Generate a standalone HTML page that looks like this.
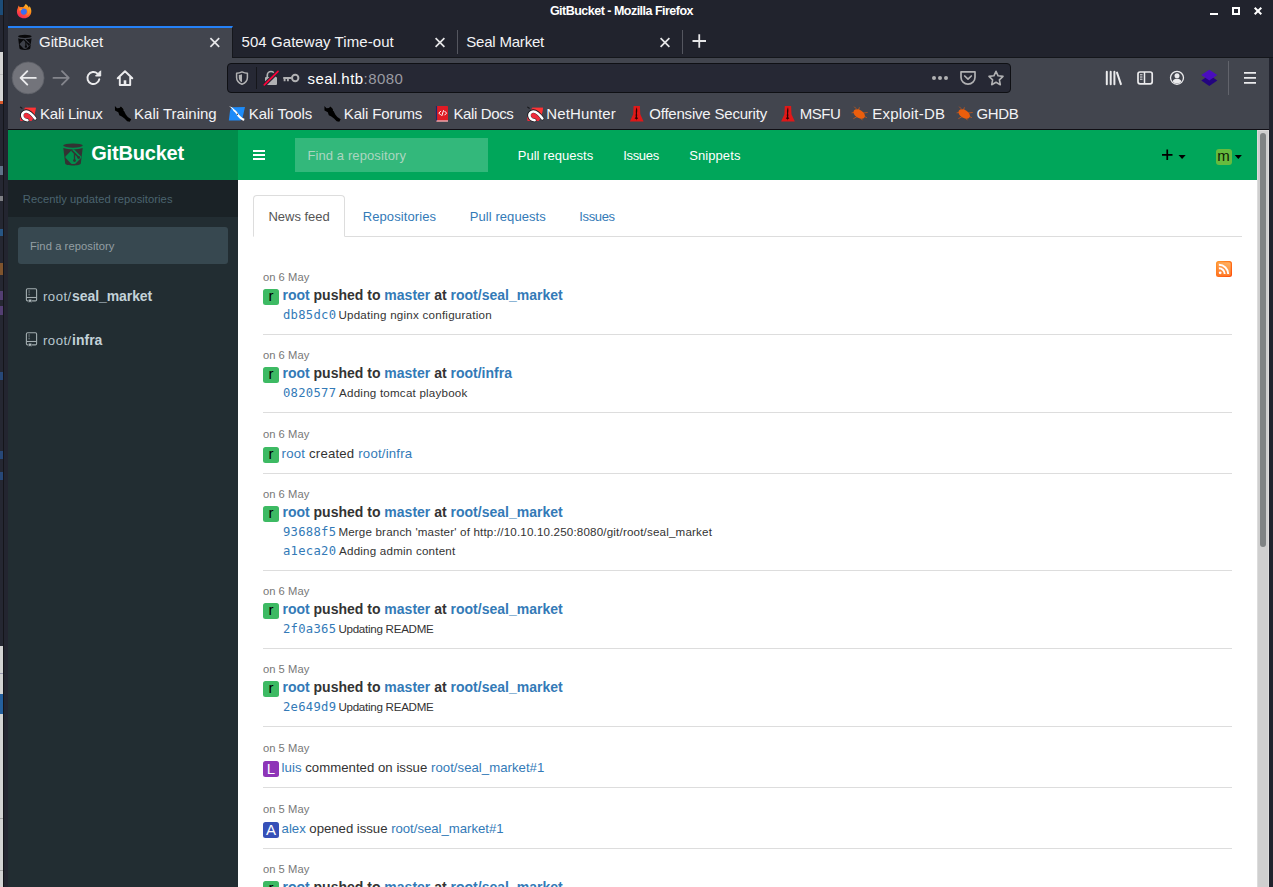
<!DOCTYPE html>
<html><head><meta charset="utf-8"><title>GitBucket</title>
<style>
*{box-sizing:border-box;margin:0;padding:0}
html,body{width:1273px;height:887px;overflow:hidden;background:#21232d;font-family:"Liberation Sans",sans-serif}
.abs{position:absolute}
#root{position:absolute;left:0;top:0;width:1273px;height:887px;overflow:hidden;background:#21232d}
svg{position:absolute;overflow:visible}
#ls div{position:absolute;left:0;width:3px}
#ls div.b{left:0;width:3px;opacity:.55}
#frame{left:3px;top:0;width:5px;height:887px;background:#232530;border-left:1px solid #14151a}
#title{left:8px;top:0;width:1265px;height:26px;background:#21232d}
#tabs{left:8px;top:26px;width:1265px;height:32px;background:#21232d;border-bottom:1px solid #14161b}
#tab1{left:0;top:0;width:225px;height:32px;background:#42454e;border-top:2px solid #2581f7;border-right:1px solid #15171c}
.tsep{top:4px;width:1px;height:24px;background:#54565f}
#nav{left:8px;top:58px;width:1261px;height:39px;background:#42454e}
#bm{left:8px;top:97px;width:1261px;height:32px;background:#42454e}
#sep{left:8px;top:129px;width:1261px;height:1px;background:#100e14}
#url{left:219px;top:5px;width:784px;height:30px;background:#262834;border:1px solid #0f1014;border-radius:4px}
#page{left:8px;top:130px;width:1249px;height:757px;background:#fff;overflow:hidden;font-size:13px;color:#333}
#logo{left:0;top:0;width:230px;height:50px;background:#008d4c}
#navbar{left:230px;top:0;width:1019px;height:50px;background:#00a65a}
#side{left:0;top:50px;width:230px;height:707px;background:#222d32}
#sidehead{left:0;top:0;width:230px;height:37px;background:#1a2226}
#scroll{left:1257px;top:130px;width:12px;height:757px;background:#cfcfcf;border:1px solid #dcdcdc;border-bottom:0}
#thumb{left:2px;top:2px;width:6px;height:414px;border-radius:3px;background:#7f8384}
a{color:#337ab7;text-decoration:none}
.s{font-family:"Liberation Sans",sans-serif;white-space:nowrap;position:absolute}
.av{width:16px;height:16px;border-radius:2.5px;font-size:15px;line-height:16px;text-align:center;font-family:"Liberation Sans",sans-serif}
.av i{font-style:normal;position:relative;top:0}
.av i.lo{top:-1px}
.hr{left:255px;width:969px;height:1px;background:#ddd}
</style></head><body>
<div id="root">
<div id="ls"><div style="top:0;height:887px;background:#252732"></div><div style="top:0;height:15px;background:#1c4c78"></div><div style="top:52px;height:49px;background:#d4d4d4"></div><div style="top:74px;height:1px;background:#bdbdbd"></div><div style="top:101px;height:3px;background:#d9582a"></div><div class="b" style="top:166px;height:9px;background:#8fb0d0"></div><div class="b" style="top:196px;height:5px;background:#c8c8c8"></div><div class="b" style="top:229px;height:7px;background:#2a7bc8"></div><div class="b" style="top:263px;height:12px;background:#c8782a"></div><div class="b" style="top:291px;height:9px;background:#7a52a8"></div><div class="b" style="top:306px;height:9px;background:#7a52a8"></div><div class="b" style="top:372px;height:8px;background:#2a62b0"></div><div class="b" style="top:451px;height:8px;background:#2a62b0"></div><div class="b" style="top:472px;height:8px;background:#2a62b0"></div><div style="top:646px;height:241px;background:#d3d3d3"></div><div style="top:673px;height:1px;background:#9a9ab0"></div><div style="top:694px;height:20px;background:#245f9e"></div><div style="top:818px;height:1px;background:#a8a8a8"></div><div style="top:870px;height:1px;background:#a8a8a8"></div></div>
<div id="frame" class="abs"></div>
<div id="title" class="abs"></div>
<div id="tabs" class="abs">
  <div id="tab1" class="abs"></div>
  <div class="tsep abs" style="left:449px"></div>
  <div class="tsep abs" style="left:674px"></div>
</div>
<div id="nav" class="abs"><div id="url" class="abs"></div></div>
<div id="bm" class="abs"></div>
<div id="sep" class="abs"></div>
<!--CI0-->
<svg id="ci" class="abs" style="left:0;top:0" width="1273" height="130" viewBox="0 0 1273 130" fill="none">
  <!-- firefox logo -->
  <g id="ff">
    <defs><linearGradient id="fg1" x1="0.850" y1="0.100" x2="0.250" y2="0.950"><stop offset="0" stop-color="#ffbd2f"/><stop offset="0.350" stop-color="#ff8a16"/><stop offset="0.700" stop-color="#ff4a3a"/><stop offset="1" stop-color="#f5285a"/></linearGradient></defs>
    <path d="M25.600 3.900c1.700 1 2.800 2.300 3.400 3.800.3-.5.400-1.100.3-1.700 1.500 1.700 2.200 3.800 2 6-.3 3.600-3.300 6.300-7.200 6.300-4 0-7.200-3-7.200-6.900 0-1.300.3-2.500.9-3.500.1-.900.5-1.800 1.100-2.500.100.800.400 1.400.900 1.900.900-.300 1.900-.300 2.900-.100.900-.200 1.900-1.300 2.900-3.300z" fill="url(#fg1)"/>
    <circle cx="23.800" cy="11.600" r="3.100" fill="#3a6df0"/>
    <path d="M19.300 8.600c1.200-.1 2.300.2 3.200.900-1.300.1-2 .7-2.500 1.600-.6-.7-.8-1.600-.7-2.500z" fill="#ffa526"/>
    <path d="M23.500 8.300c1.700-.4 3.600.4 4.300 2.200.8 2-.2 4.100-2.200 4.900 2.800-.2 4.600-2.800 3.800-5.400-.6-1.800-2.200-3.100-4.200-3.400-.5.500-1.100 1.100-1.700 1.700z" fill="#ff9a1f" opacity=".85"/>
  </g>
  <!-- window buttons -->
  <rect x="1210" y="13" width="8" height="2" fill="#fff"/>
  <rect x="1233" y="8" width="6" height="6" stroke="#fff" stroke-width="2"/>
  <path d="M1254.700 7.700l6.600 6.600M1261.300 7.700l-6.600 6.600" stroke="#fff" stroke-width="2"/>
  <!-- tab favicon (bucket) -->
  <g id="fav" transform="translate(18.100 35) scale(.690 .680) translate(-63.200 -143.500)">
    <ellipse cx="73" cy="145.600" rx="9.800" ry="2.300" fill="#08080a"/>
    <path d="M63.300 148.100c2.500.9 6 1.300 9.700 1.300s7.200-.4 9.700-1.300l-1.900 15.300c-.3 1.300-3.700 2-7.800 2s-7.500-.7-7.800-2z" fill="#08080a"/>
    <path d="M65.700 156.300l6.400-6.500c.7-.7 1.700-.7 2.400 0l6.500 6.500c.5.500.5 1.200 0 1.700l-5.400 5.400c-.7.700-3.900.7-4.600 0l-5.300-5.400c-.5-.5-.5-1.200 0-1.700z" fill="#3d4049"/>
    <path d="M71.500 150.300l7 7" stroke="#08080a" stroke-width="2"/>
    <circle cx="78.700" cy="157.500" r="1.700" fill="#08080a"/>
    <path d="M74.500 153.500v7" stroke="#08080a" stroke-width="1.700"/>
    <circle cx="74.500" cy="160.600" r="1.700" fill="#08080a"/>
  </g>
  <!-- tab close buttons / plus -->
  <g stroke="#e6e6e8" stroke-width="1.700">
    <path d="M210.400 38.100l8.800 8.800M219.200 38.100l-8.800 8.800"/>
    <path d="M435.600 38.100l8.800 8.800M444.400 38.100l-8.800 8.800"/>
    <path d="M660.600 38.100l8.800 8.800M669.400 38.100l-8.800 8.800"/>
    <path d="M692.500 41h13.500M699.250 34.300v13.400" stroke-width="1.800"/>
  </g>
  <!-- nav buttons -->
  <circle cx="28.100" cy="77.900" r="16" fill="#73747b" stroke="#5c5e66" stroke-width="0.800"/>
  <path d="M35.800 77.900H21M27.300 71.200l-6.700 6.700 6.700 6.700" stroke="#ebebed" stroke-width="1.900" stroke-linecap="round" stroke-linejoin="round"/>
  <path d="M53.500 77.900h15M62 71.200l6.700 6.700-6.700 6.700" stroke="#84858c" stroke-width="1.900" stroke-linecap="round" stroke-linejoin="round"/>
  <path d="M99.300 79.200a6 6 0 1 1-1.800-5.600" stroke="#ebebed" stroke-width="1.900" stroke-linecap="round"/>
  <path d="M100.700 70.800v5.200h-5.200z" fill="#ebebed" stroke="#ebebed" stroke-width="1" stroke-linejoin="round"/>
  <path d="M117.700 78.300l7.300-7.100 7.300 7.100M119.800 77.200v7.800h10.400v-7.800" stroke="#ebebed" stroke-width="1.900" stroke-linecap="round" stroke-linejoin="round"/>
  <rect x="123.700" y="80.300" width="2.600" height="4.200" fill="#ebebed"/>
  <!-- url bar icons -->
  <path d="M242 71.900c2 .9 3.700 1.300 5.400 1.400v4.200c0 3.400-2.400 5.600-5.400 6.700-3-1.100-5.400-3.300-5.400-6.700v-4.200c1.700-.1 3.400-.5 5.400-1.400z" stroke="#b1b1b3" stroke-width="1.500" stroke-linejoin="round"/>
  <path d="M242 74.300v8c-2.200-1-3.200-2.600-3.200-4.800v-2.600c1.200-.1 2.200-.3 3.200-.6z" fill="#b1b1b3"/>
  <rect x="256" y="67" width="1" height="22" fill="#15161b"/>
  <path d="M267.300 77.500v-2.300a3.700 3.700 0 0 1 7.400 0v2.300" stroke="#b1b1b3" stroke-width="1.700"/>
  <rect x="265" y="77" width="12" height="8" rx="1" fill="#b1b1b3"/>
  <path d="M264.300 84.900L278 71.400" stroke="#252733" stroke-width="4"/>
  <path d="M264.300 84.900L278 71.400" stroke="#ff0039" stroke-width="1.700" stroke-linecap="round"/>
  <circle cx="295.200" cy="78" r="3.200" stroke="#b1b1b3" stroke-width="2"/>
  <path d="M291.500 78H283.200M284.600 78v3.300M287.900 78v3.300" stroke="#b1b1b3" stroke-width="1.900"/>
  <circle cx="934" cy="77.900" r="2" fill="#b1b1b3"/><circle cx="940" cy="77.900" r="2" fill="#b1b1b3"/><circle cx="946" cy="77.900" r="2" fill="#b1b1b3"/>
  <path d="M961 71.800h14v5.400a7 7 0 0 1-14 0z" stroke="#b1b1b3" stroke-width="1.700" stroke-linejoin="round"/>
  <path d="M964.700 76l3.300 3.200 3.300-3.200" stroke="#b1b1b3" stroke-width="1.700" stroke-linecap="round" stroke-linejoin="round"/>
  <path d="M996 71.300l2.100 4.500 4.900.6-3.600 3.400.9 4.900-4.300-2.400-4.300 2.400.9-4.900-3.600-3.400 4.900-.6z" stroke="#b1b1b3" stroke-width="1.600" stroke-linejoin="round"/>
  <!-- right toolbar icons -->
  <path d="M1106.800 71.800v12.400M1110.700 71.800v12.400M1114.400 71.800v12.400M1117 72.600l3.900 11.500" stroke="#ebebed" stroke-width="2" stroke-linecap="round"/>
  <rect x="1138" y="72" width="14.200" height="11.800" rx="2" stroke="#ebebed" stroke-width="1.700"/>
  <path d="M1144.500 72v11.800" stroke="#ebebed" stroke-width="1.500"/>
  <path d="M1140 74.800h2.500M1140 77h2.500M1140 79.200h2.500" stroke="#ebebed" stroke-width="1"/>
  <circle cx="1177" cy="77.800" r="6.500" stroke="#ebebed" stroke-width="1.300"/>
  <circle cx="1177" cy="75.700" r="2.500" fill="#ebebed"/>
  <path d="M1172.600 81.200c1-2 2.600-2.500 4.400-2.500s3.400.5 4.400 2.500c-1 1.400-2.600 2.300-4.400 2.300s-3.400-.9-4.400-2.300z" fill="#ebebed"/>
  <path d="M1209.300 75l8 5.500-8 5.500-8-5.500z" fill="#23047f"/>
  <path d="M1209.300 69.700l8 5.400-8 5.400-8-5.400z" fill="#4a0dbf"/>
  <rect x="1228" y="61" width="1" height="34" fill="#62646c"/>
  <path d="M1244 72.800h12M1244 77.900h12M1244 82.900h12" stroke="#ebebed" stroke-width="1.800"/>
  <!-- bookmark favicons -->
  <g id="kl">
    <path d="M24.900 107.700h10.900l-1.600 9.300-2.600 4H20.300l-.4-3z" fill="#ef2d3c"/>
    <path d="M24.900 107.700h10.900l-1.400 8-7-6z" fill="#ff3434"/>
    <path d="M20.100 106.900l2.300 1.600" stroke="#15161a" stroke-width="1.100"/>
    <path d="M27.500 120.400c-5.500-.3-7.500-6.200-3.500-8.600 3.800-2.300 8.200 2.300 11.300 6.800" stroke="#1a1b20" stroke-width="3.600" fill="none" stroke-linecap="round"/>
    <path d="M27.500 120.300c-5.300-.5-7-6-3.300-8.300 3.700-2.200 8 2.300 11 6.500" stroke="#fff" stroke-width="2.500" fill="none" stroke-linecap="round"/>
  </g>
  <g transform="translate(507.200 0)">
    <path d="M24.900 107.700h10.900l-1.600 9.300-2.600 4H20.300l-.4-3z" fill="#ef2d3c"/>
    <path d="M24.900 107.700h10.900l-1.400 8-7-6z" fill="#ff3434"/>
    <path d="M20.100 106.900l2.300 1.600" stroke="#15161a" stroke-width="1.100"/>
    <path d="M27.500 120.400c-5.500-.3-7.500-6.200-3.500-8.600 3.800-2.300 8.200 2.300 11.300 6.800" stroke="#1a1b20" stroke-width="3.600" fill="none" stroke-linecap="round"/>
    <path d="M27.500 120.300c-5.300-.5-7-6-3.300-8.300 3.700-2.200 8 2.300 11 6.500" stroke="#fff" stroke-width="2.500" fill="none" stroke-linecap="round"/>
  </g>
  <g id="dr">
    <path d="M114.900 106l2.100 2.200 2.500-.2 1.500-1.800 2.200 2.300 1.100 3 1.500 3 2 2.500 3.400 2.200-1.400 2.600-2.600-.6-2.700-2.700-2.700-1.900-2.500-1.400-1-2.900-3.300-1.900z" fill="#000"/>
    <path d="M121 106.200l2.200 2.300 1.100 3" stroke="#6c6e76" stroke-width=".600" stroke-dasharray=".8 .8"/>
  </g>
  <g transform="translate(209.500 0)">
    <path d="M114.900 106l2.100 2.200 2.500-.2 1.500-1.800 2.200 2.300 1.100 3 1.500 3 2 2.500 3.400 2.200-1.400 2.600-2.600-.6-2.700-2.700-2.700-1.900-2.500-1.400-1-2.900-3.300-1.900z" fill="#000"/>
    <path d="M121 106.200l2.200 2.300 1.100 3" stroke="#6c6e76" stroke-width=".600" stroke-dasharray=".8 .8"/>
  </g>
  <path d="M231.700 107.200l13.300-.2-2.500 11-2 2.500-11.700.1 1.200-9.500z" fill="#1d8bf8"/>
  <path d="M229 106c2.200.8 3.800 1.800 5 3.200 1.500.9 2.600 2 3.400 3.400 1 1.600 2.200 3 3.600 4.100 1 .8 2.200 1.500 3.500 2.100l-.5 2c-1.700-.5-3.400-1.500-4.600-2.600-1.300-1.100-2.200-2.400-2.900-3.800-.8-1.400-1.700-2.600-3-3.500-.9-1.900-2.600-3.400-4.500-4.900z" fill="#fff"/>
  <circle cx="237.300" cy="114.200" r=".7" fill="#333"/>
  <rect x="435.800" y="106" width="12.200" height="15.600" rx=".8" fill="#e01b24"/>
  <rect x="435.800" y="106" width="1.300" height="15" fill="#1a2a6c"/>
  <rect x="436.500" y="120.400" width="11.500" height="1.200" fill="#e9c9cc"/>
  <path d="M440.700 111.200l-1.900 1.900 1.900 1.900M444.700 111.200l1.900 1.900-1.900 1.900M443.500 110.600l-1.600 5" stroke="#fff" stroke-width="1" stroke-linecap="round" stroke-linejoin="round"/>
  <g id="of">
    <path d="M633.600 106h6.300l.4 8.200 3.300 7.400h-13.700l3.300-7.400z" fill="#e01818"/>
    <path d="M636.800 107.300c.5 2 .6 4 .1 6 .4 1.500.4 2.700 0 3.700l1.300 1.500-1.500.5-.1 1.600-.6-1.600-1.400-.5 1.200-1.500c-.3-1.200-.3-2.400.1-3.700-.3-2.100-.1-4.100.9-6z" fill="#2a0505"/>
  </g>
  <g transform="translate(151.200 0)">
    <path d="M633.600 106h6.300l.4 8.200 3.300 7.400h-13.700l3.300-7.400z" fill="#e01818"/>
    <path d="M636.800 107.300c.5 2 .6 4 .1 6 .4 1.500.4 2.700 0 3.700l1.300 1.500-1.500.5-.1 1.600-.6-1.600-1.400-.5 1.200-1.500c-.3-1.200-.3-2.400.1-3.700-.3-2.100-.1-4.100.9-6z" fill="#2a0505"/>
  </g>
  <g id="bug">
    <ellipse cx="859.200" cy="114" rx="6.300" ry="4" transform="rotate(33 859.200 114)" fill="#ec5e0c"/>
    <path d="M856 108.500l-1.500-1.500M858.500 110l.8-2.300M863.500 113l3.800-.5M854 112.500l-2 .3M856.500 117l-2.800 1.500M861 118.500l1.200 1.400M864.500 116.500l2 1" stroke="#ec5e0c" stroke-width=".800" stroke-linecap="round" opacity=".8"/>
  </g>
  <g transform="translate(105 0)">
    <ellipse cx="859.200" cy="114" rx="6.300" ry="4" transform="rotate(33 859.200 114)" fill="#ec5e0c"/>
    <path d="M856 108.500l-1.500-1.500M858.500 110l.8-2.300M863.500 113l3.800-.5M854 112.500l-2 .3M856.500 117l-2.800 1.500M861 118.500l1.200 1.400M864.500 116.500l2 1" stroke="#ec5e0c" stroke-width=".800" stroke-linecap="round" opacity=".8"/>
  </g>
</svg>
<!--CI1-->
<span class="s" id="t0" style="left:549.92px;top:1px;font-size:12.5px;line-height:20px;letter-spacing:-0.514px;font-weight:bold;color:#fff">GitBucket - Mozilla Firefox</span>
<span class="s" id="t1" style="left:39.07px;top:32px;font-size:15px;line-height:20px;letter-spacing:-0.102px;color:#f3f3f5">GitBucket</span>
<span class="s" id="t2" style="left:241.53px;top:32px;font-size:15px;line-height:20px;letter-spacing:0.068px;color:#f3f3f5">504 Gateway Time-out</span>
<span class="s" id="t3" style="left:466.30px;top:32px;font-size:15px;line-height:20px;letter-spacing:-0.207px;color:#f3f3f5">Seal Market</span>
<span class="s" id="t4" style="left:307.46px;top:69px;font-size:15px;line-height:20px;letter-spacing:0.444px;color:#fff">seal.htb<span style="color:#9a9ba2">:8080</span></span>
<span class="s" id="t5" style="left:40.07px;top:104px;font-size:15px;line-height:20px;letter-spacing:-0.260px;color:#f3f3f5">Kali Linux</span>
<span class="s" id="t6" style="left:134.07px;top:104px;font-size:15px;line-height:20px;letter-spacing:0.007px;color:#f3f3f5">Kali Training</span>
<span class="s" id="t7" style="left:248.84px;top:104px;font-size:15px;line-height:20px;letter-spacing:-0.060px;color:#f3f3f5">Kali Tools</span>
<span class="s" id="t8" style="left:343.84px;top:104px;font-size:15px;line-height:20px;letter-spacing:-0.155px;color:#f3f3f5">Kali Forums</span>
<span class="s" id="t9" style="left:453.45px;top:104px;font-size:15px;line-height:20px;letter-spacing:-0.372px;color:#f3f3f5">Kali Docs</span>
<span class="s" id="t10" style="left:546.30px;top:104px;font-size:15px;line-height:20px;letter-spacing:0.144px;color:#f3f3f5">NetHunter</span>
<span class="s" id="t11" style="left:649.23px;top:104px;font-size:15px;line-height:20px;letter-spacing:-0.203px;color:#f3f3f5">Offensive Security</span>
<span class="s" id="t12" style="left:799.84px;top:104px;font-size:15px;line-height:20px;letter-spacing:-0.495px;color:#f3f3f5">MSFU</span>
<span class="s" id="t13" style="left:872.30px;top:104px;font-size:15px;line-height:20px;letter-spacing:0.203px;color:#f3f3f5">Exploit-DB</span>
<span class="s" id="t14" style="left:976.53px;top:104px;font-size:15px;line-height:20px;letter-spacing:-0.404px;color:#f3f3f5">GHDB</span>
<div id="page" class="abs">
  <div id="logo" class="abs"></div>
  <div id="navbar" class="abs">
    <div class="abs" style="left:57px;top:8px;width:193px;height:34px;background:#33b87b"></div>
  </div>
  <div id="side" class="abs">
    <div id="sidehead" class="abs"></div>
    <div class="abs" style="left:10px;top:47px;width:210px;height:37px;background:#374850;border-radius:3px"></div>
  </div>
  <div class="abs" style="left:245px;top:106px;width:989px;height:1px;background:#ddd"></div>
  <div class="abs" style="left:245px;top:65px;width:92px;height:42px;border:1px solid #ddd;border-bottom-color:#fff;border-radius:4px 4px 0 0;background:#fff"></div>
<!--PI0-->
<svg class="abs" style="left:0;top:0" width="1249" height="757" viewBox="8 130 1249 757" fill="none">
  <!-- logo bucket -->
  <g id="bucket">
    <ellipse cx="73" cy="145.600" rx="9.800" ry="2.100" fill="#333"/>
    <path d="M63.300 148.100c2.500.9 6 1.300 9.700 1.300s7.200-.4 9.700-1.300l-1.900 15.300c-.3 1.300-3.700 2-7.800 2s-7.500-.7-7.800-2z" fill="#333"/>
    <path d="M65.700 156.300l6.400-6.500c.7-.7 1.700-.7 2.400 0l6.500 6.500c.5.500.5 1.200 0 1.700l-5.400 5.400c-.7.700-3.900.7-4.600 0l-5.300-5.400c-.5-.5-.5-1.200 0-1.700z" fill="#008d4c"/>
    <path d="M71.500 150.300l7 7" stroke="#333" stroke-width="1.600"/>
    <circle cx="78.700" cy="157.500" r="1.400" fill="#333"/>
    <path d="M74.500 153.500v7" stroke="#333" stroke-width="1.300"/>
    <circle cx="74.500" cy="160.600" r="1.400" fill="#333"/>
    <path d="M79.500 161.500l1.200-1.500" stroke="#333" stroke-width="1"/>
  </g>
  <!-- hamburger -->
  <path d="M253 151h12M253 155h12M253 159h12" stroke="#fff" stroke-width="2"/>
  <!-- plus / carets / m avatar -->
  <path d="M1162 154.800h10.500M1167.250 149.600v10.400" stroke="#000" stroke-width="1.700"/>
  <path d="M1178.500 155h7.200l-3.600 3.900z" fill="#000"/>
  <rect x="1216" y="149" width="16" height="16" rx="3" fill="#66bb3e"/>
  <path d="M1234.700 155h7.200l-3.600 3.900z" fill="#000"/>
  <!-- rss -->
  <defs><linearGradient id="rg" x1="0" y1="0" x2="1" y2="1"><stop offset="0" stop-color="#ff9a2e"/><stop offset="1" stop-color="#ff4a08"/></linearGradient>
  <linearGradient id="rg2" x1="0.700" y1="0" x2="0.300" y2="1"><stop offset="0" stop-color="#ffb060"/><stop offset="1" stop-color="#ff7a28"/></linearGradient></defs>
  <rect x="1216" y="261" width="16" height="16" rx="2.500" fill="url(#rg)"/>
  <rect x="1217.300" y="262.300" width="13.400" height="13.400" rx="1.500" fill="url(#rg2)"/>
  <circle cx="1220.200" cy="272.800" r="1.400" fill="#fff"/>
  <path d="M1218.900 268.300a5.800 5.800 0 0 1 5.800 5.800M1218.900 264.800a9.300 9.300 0 0 1 9.300 9.300" stroke="#fff" stroke-width="1.900"/>
  <!-- repo icons -->
  <g id="repo" stroke="#a3adb0" stroke-width="1.100">
    <rect x="26.400" y="288.750" width="10.200" height="12.100" rx="1.200"/>
    <path d="M26.400 297.500h10.200"/>
    <path d="M29.100 290.500v.9M29.100 292.400v.9M29.100 294.300v.9" stroke-width="1.300" stroke="#8d979a"/>
    <path d="M28.600 299.200h3v3.900l-1.500-1.300-1.500 1.300z" fill="#b3bdc0" stroke="#222d32" stroke-width=".500"/>
  </g>
  <g transform="translate(0 44)" stroke="#a3adb0" stroke-width="1.100">
    <rect x="26.400" y="288.750" width="10.200" height="12.100" rx="1.200"/>
    <path d="M26.400 297.500h10.200"/>
    <path d="M29.100 290.500v.9M29.100 292.400v.9M29.100 294.300v.9" stroke-width="1.300" stroke="#8d979a"/>
    <path d="M28.600 299.200h3v3.900l-1.500-1.300-1.500 1.300z" fill="#b3bdc0" stroke="#222d32" stroke-width=".500"/>
  </g>
</svg>
<!--PI1-->
<div class="av abs" style="left:255px;top:159px;background:#3dba63;color:#000"><i class="lo">r</i></div>
<div class="hr abs" style="top:204px"></div>
<div class="av abs" style="left:255px;top:237px;background:#3dba63;color:#000"><i class="lo">r</i></div>
<div class="hr abs" style="top:282px"></div>
<div class="av abs" style="left:255px;top:317px;background:#3dba63;color:#000"><i class="lo">r</i></div>
<div class="hr abs" style="top:343px"></div>
<div class="av abs" style="left:255px;top:376px;background:#3dba63;color:#000"><i class="lo">r</i></div>
<div class="hr abs" style="top:440px"></div>
<div class="av abs" style="left:255px;top:473px;background:#3dba63;color:#000"><i class="lo">r</i></div>
<div class="hr abs" style="top:518px"></div>
<div class="av abs" style="left:255px;top:551px;background:#3dba63;color:#000"><i class="lo">r</i></div>
<div class="hr abs" style="top:596px"></div>
<div class="av abs" style="left:255px;top:631px;background:#8e35b8;color:#fff"><i class="up">L</i></div>
<div class="hr abs" style="top:657px"></div>
<div class="av abs" style="left:255px;top:692px;background:#3650b8;color:#fff"><i class="up">A</i></div>
<div class="hr abs" style="top:718px"></div>
<div class="av abs" style="left:255px;top:751px;background:#3dba63;color:#000"><i class="lo">r</i></div>
<span class="s" id="t15" style="left:83.15px;top:13px;font-size:20px;line-height:20px;letter-spacing:-0.176px;font-weight:bold;color:#fff">GitBucket</span>
<span class="s" id="t16" style="left:299.45px;top:16px;font-size:13px;line-height:20px;letter-spacing:0.105px;color:#acd6c0">Find a repository</span>
<span class="s" id="t17" style="left:509.68px;top:16px;font-size:13px;line-height:20px;letter-spacing:0.037px;color:#fff">Pull requests</span>
<span class="s" id="t18" style="left:615.30px;top:16px;font-size:13px;line-height:20px;letter-spacing:-0.348px;color:#fff">Issues</span>
<span class="s" id="t19" style="left:681.15px;top:16px;font-size:13px;line-height:20px;letter-spacing:0.093px;color:#fff">Snippets</span>
<span class="s" id="t20" style="left:14.84px;top:59px;font-size:11.2px;line-height:20px;letter-spacing:0.059px;color:#4b646f">Recently updated repositories</span>
<span class="s" id="t21" style="left:21.92px;top:106px;font-size:11.2px;line-height:20px;letter-spacing:0.072px;color:#949fa3">Find a repository</span>
<span class="s" id="t22" style="left:34.92px;top:157px;font-size:13.2px;line-height:20px;letter-spacing:0.497px;color:#b8c7ce">root/</span>
<span class="s" id="t23" style="left:64.07px;top:156px;font-size:14px;line-height:20px;letter-spacing:-0.077px;font-weight:bold;color:#c3d2d9">seal_market</span>
<span class="s" id="t24" style="left:34.92px;top:201px;font-size:13.2px;line-height:20px;letter-spacing:0.497px;color:#b8c7ce">root/</span>
<span class="s" id="t25" style="left:64.07px;top:200px;font-size:14px;line-height:20px;letter-spacing:-0.009px;font-weight:bold;color:#c3d2d9">infra</span>
<span class="s" id="t26" style="left:260.45px;top:77px;font-size:13px;line-height:20px;letter-spacing:-0.008px;color:#555">News feed</span>
<span class="s" id="t27" style="left:354.68px;top:77px;font-size:13px;line-height:20px;letter-spacing:0.096px;color:#337ab7">Repositories</span>
<span class="s" id="t28" style="left:461.76px;top:77px;font-size:13px;line-height:20px;letter-spacing:0.072px;color:#337ab7">Pull requests</span>
<span class="s" id="t29" style="left:571.30px;top:77px;font-size:13px;line-height:20px;letter-spacing:-0.371px;color:#337ab7">Issues</span>
<span class="s" id="t30" style="left:1209.30px;top:16px;font-size:15px;line-height:20px;letter-spacing:0.000px;color:#0d1a05">m</span>
<span class="s" id="t31" style="left:254.92px;top:137px;font-size:11.2px;line-height:20px;letter-spacing:0.054px;color:#777">on 6 May</span>
<span class="s" id="t32" style="left:274.45px;top:155px;font-size:14px;line-height:20px;letter-spacing:0.002px;font-weight:bold;color:#333"><a>root</a> pushed to <a>master</a> at <a>root/seal_market</a></span>
<span class="s" id="t33" style="left:274.90px;top:175px;font-size:12.2px;line-height:20px;letter-spacing:0.300px;color:#337ab7;font-family:'DejaVu Sans Mono','Liberation Mono',monospace">db85dc0</span>
<span class="s" id="t34" style="left:330.38px;top:175px;font-size:11.6px;line-height:20px;letter-spacing:0.236px;color:#333">Updating nginx configuration</span>
<span class="s" id="t35" style="left:254.92px;top:215px;font-size:11.2px;line-height:20px;letter-spacing:0.054px;color:#777">on 6 May</span>
<span class="s" id="t36" style="left:274.45px;top:233px;font-size:14px;line-height:20px;letter-spacing:-0.000px;font-weight:bold;color:#333"><a>root</a> pushed to <a>master</a> at <a>root/infra</a></span>
<span class="s" id="t37" style="left:274.90px;top:253px;font-size:12.2px;line-height:20px;letter-spacing:0.300px;color:#337ab7;font-family:'DejaVu Sans Mono','Liberation Mono',monospace">0820577</span>
<span class="s" id="t38" style="left:331.08px;top:253px;font-size:11.6px;line-height:20px;letter-spacing:0.214px;color:#333">Adding tomcat playbook</span>
<span class="s" id="t39" style="left:254.92px;top:294px;font-size:11.2px;line-height:20px;letter-spacing:0.054px;color:#777">on 6 May</span>
<span class="s" id="t40" style="left:273.61px;top:314px;font-size:13.2px;line-height:20px;letter-spacing:0.201px;color:#333"><a>root</a> created <a>root/infra</a></span>
<span class="s" id="t41" style="left:254.92px;top:354px;font-size:11.2px;line-height:20px;letter-spacing:0.054px;color:#777">on 6 May</span>
<span class="s" id="t42" style="left:274.45px;top:372px;font-size:14px;line-height:20px;letter-spacing:0.002px;font-weight:bold;color:#333"><a>root</a> pushed to <a>master</a> at <a>root/seal_market</a></span>
<span class="s" id="t43" style="left:274.90px;top:392px;font-size:12.2px;line-height:20px;letter-spacing:0.300px;color:#337ab7;font-family:'DejaVu Sans Mono','Liberation Mono',monospace">93688f5</span>
<span class="s" id="t44" style="left:330.38px;top:392px;font-size:11.6px;line-height:20px;letter-spacing:0.174px;color:#333">Merge branch 'master' of http://10.10.10.250:8080/git/root/seal_market</span>
<span class="s" id="t45" style="left:274.90px;top:411px;font-size:12.2px;line-height:20px;letter-spacing:0.300px;color:#337ab7;font-family:'DejaVu Sans Mono','Liberation Mono',monospace">a1eca20</span>
<span class="s" id="t46" style="left:331.08px;top:411px;font-size:11.6px;line-height:20px;letter-spacing:0.208px;color:#333">Adding admin content</span>
<span class="s" id="t47" style="left:254.92px;top:451px;font-size:11.2px;line-height:20px;letter-spacing:0.054px;color:#777">on 6 May</span>
<span class="s" id="t48" style="left:274.45px;top:469px;font-size:14px;line-height:20px;letter-spacing:0.002px;font-weight:bold;color:#333"><a>root</a> pushed to <a>master</a> at <a>root/seal_market</a></span>
<span class="s" id="t49" style="left:274.90px;top:489px;font-size:12.2px;line-height:20px;letter-spacing:0.300px;color:#337ab7;font-family:'DejaVu Sans Mono','Liberation Mono',monospace">2f0a365</span>
<span class="s" id="t50" style="left:330.38px;top:489px;font-size:11.6px;line-height:20px;letter-spacing:-0.269px;color:#333">Updating README</span>
<span class="s" id="t51" style="left:254.92px;top:529px;font-size:11.2px;line-height:20px;letter-spacing:0.054px;color:#777">on 5 May</span>
<span class="s" id="t52" style="left:274.45px;top:547px;font-size:14px;line-height:20px;letter-spacing:0.002px;font-weight:bold;color:#333"><a>root</a> pushed to <a>master</a> at <a>root/seal_market</a></span>
<span class="s" id="t53" style="left:274.90px;top:567px;font-size:12.2px;line-height:20px;letter-spacing:0.300px;color:#337ab7;font-family:'DejaVu Sans Mono','Liberation Mono',monospace">2e649d9</span>
<span class="s" id="t54" style="left:330.38px;top:567px;font-size:11.6px;line-height:20px;letter-spacing:-0.269px;color:#333">Updating README</span>
<span class="s" id="t55" style="left:254.92px;top:608px;font-size:11.2px;line-height:20px;letter-spacing:0.054px;color:#777">on 5 May</span>
<span class="s" id="t56" style="left:273.61px;top:628px;font-size:13.2px;line-height:20px;letter-spacing:0.024px;color:#333"><a>luis</a> commented on issue <a>root/seal_market#1</a></span>
<span class="s" id="t57" style="left:254.92px;top:669px;font-size:11.2px;line-height:20px;letter-spacing:0.054px;color:#777">on 5 May</span>
<span class="s" id="t58" style="left:273.61px;top:689px;font-size:13.2px;line-height:20px;letter-spacing:-0.026px;color:#333"><a>alex</a> opened issue <a>root/seal_market#1</a></span>
<span class="s" id="t59" style="left:254.92px;top:729px;font-size:11.2px;line-height:20px;letter-spacing:0.054px;color:#777">on 5 May</span>
<span class="s" id="t60" style="left:274.45px;top:747px;font-size:14px;line-height:20px;letter-spacing:0.002px;font-weight:bold;color:#333"><a>root</a> pushed to <a>master</a> at <a>root/seal_market</a></span>
</div>
<div id="scroll" class="abs"><div id="thumb" class="abs"></div></div>
</div>
</body></html>
